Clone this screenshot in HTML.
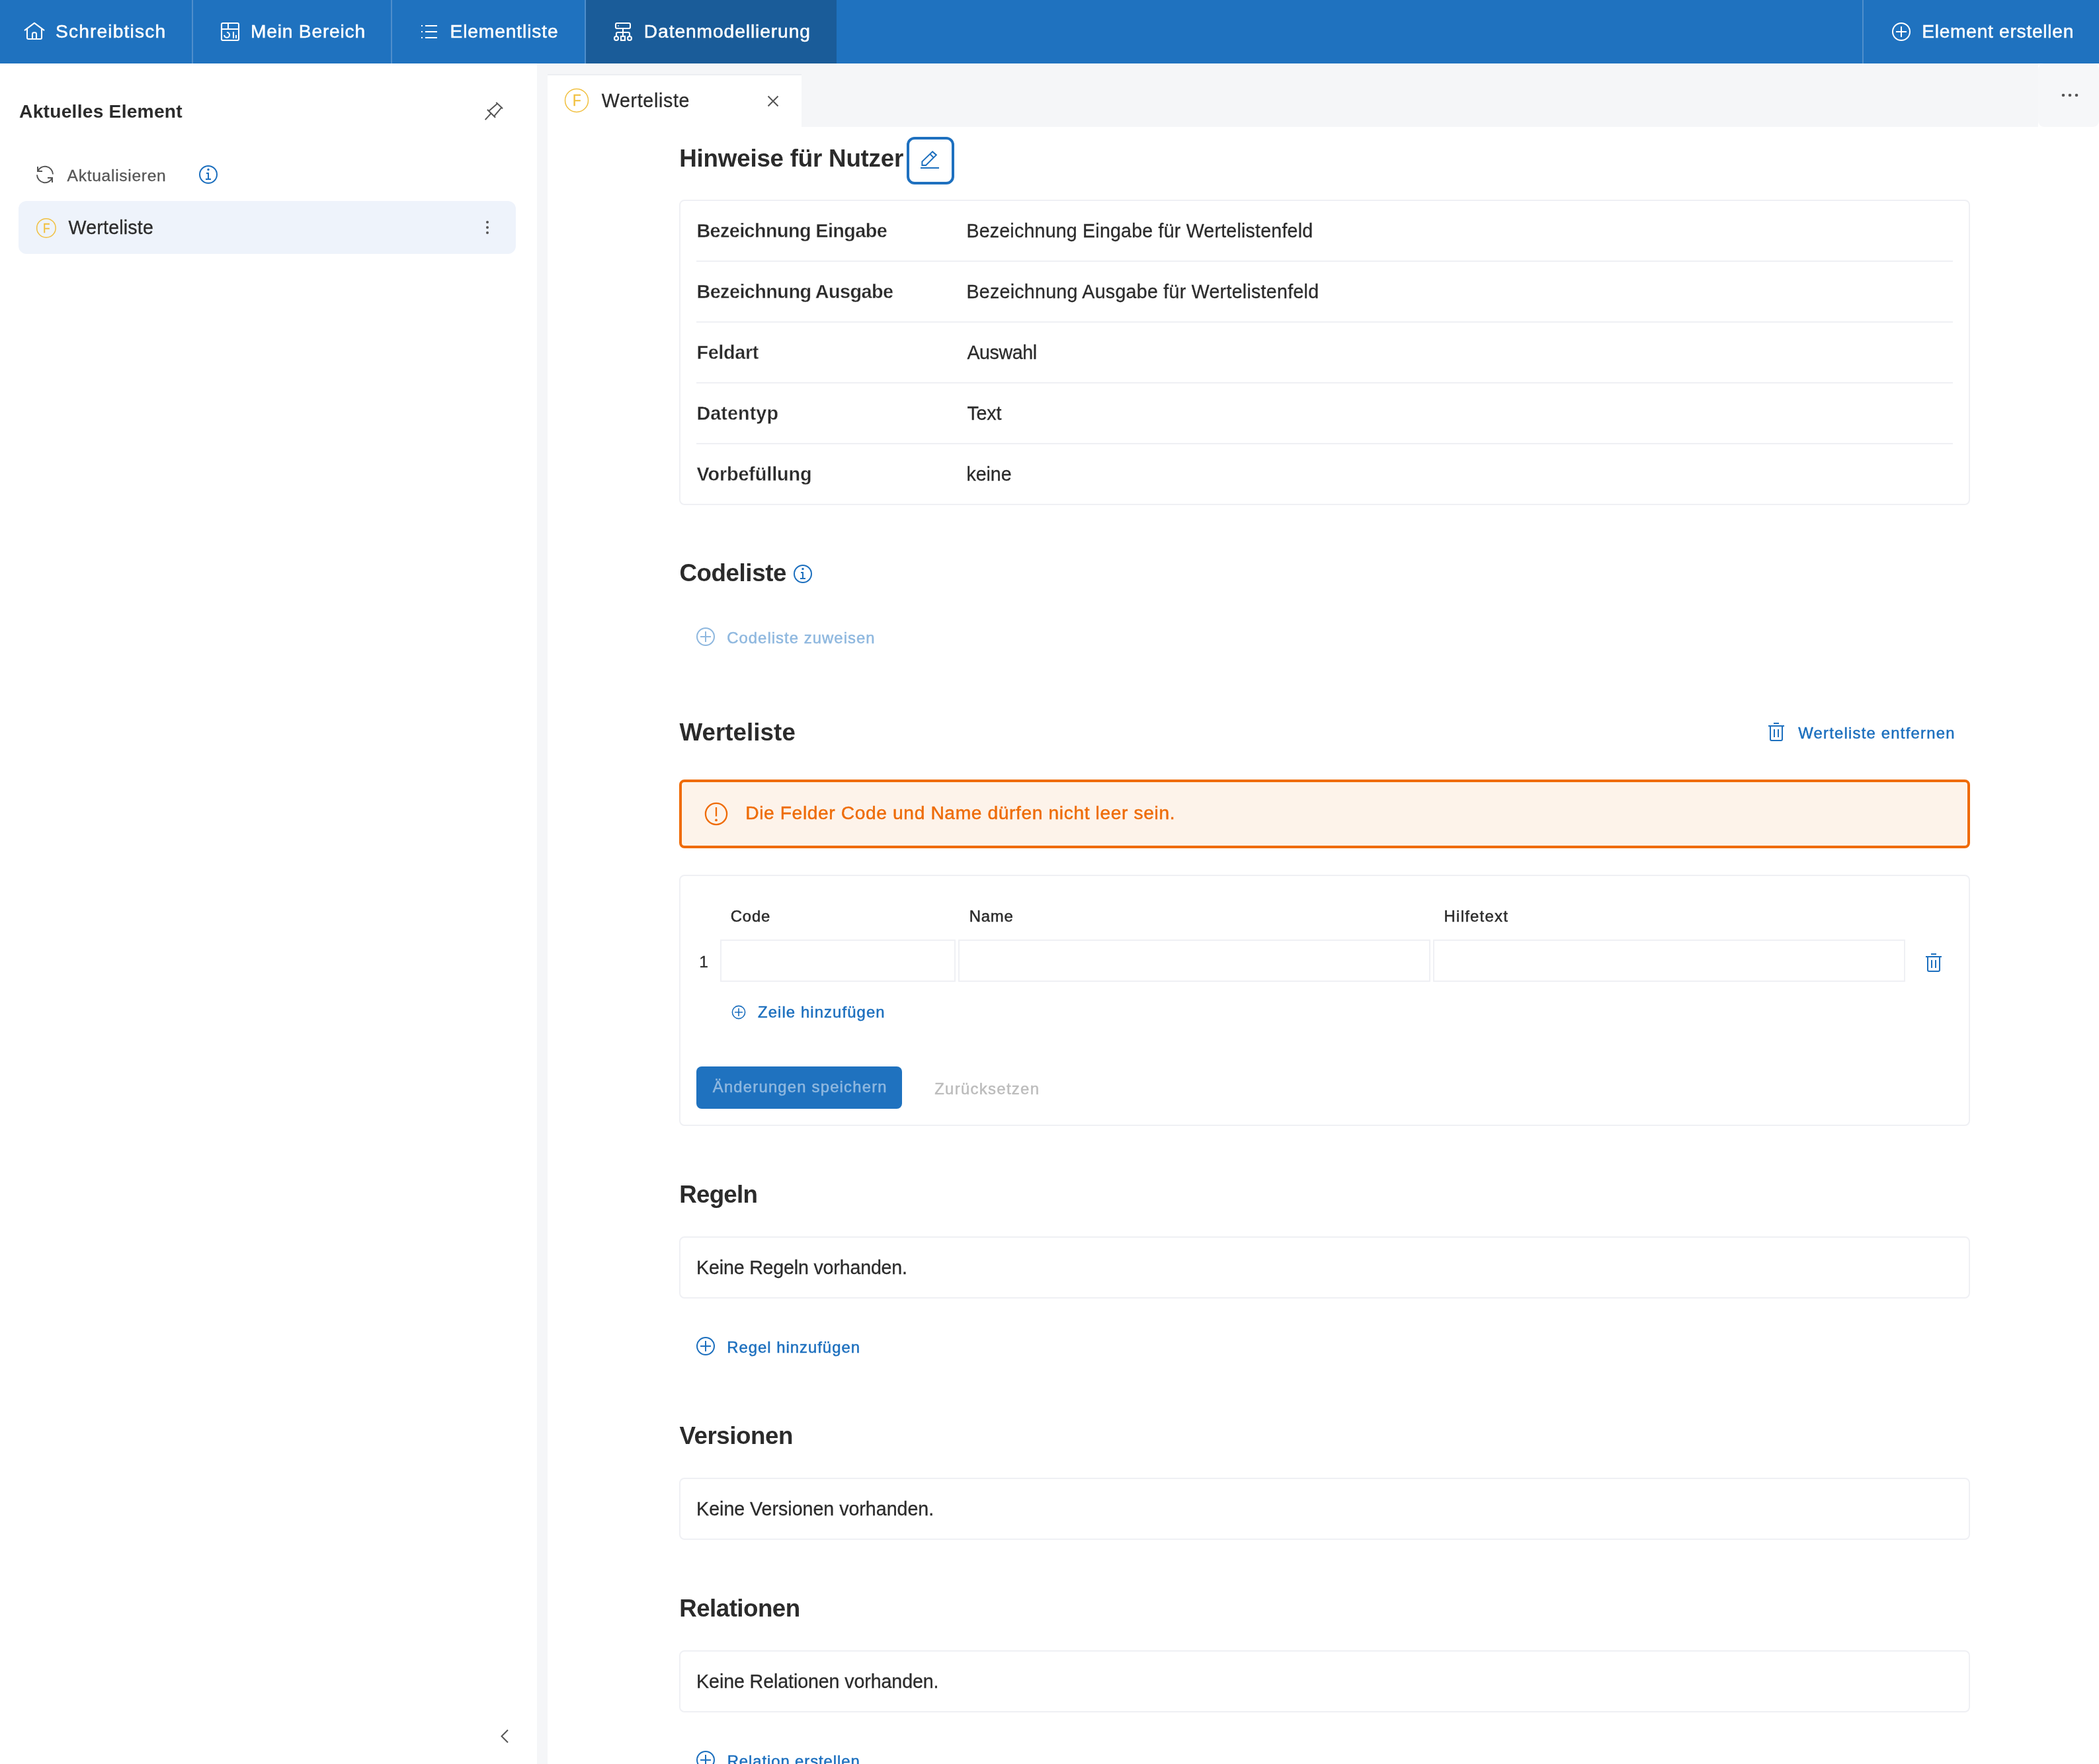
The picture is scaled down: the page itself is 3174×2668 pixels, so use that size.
<!DOCTYPE html>
<html lang="de"><head><meta charset="utf-8"><title>Datenmodellierung</title>
<style>
html,body{margin:0;padding:0;background:#fff;}
body{width:3174px;height:2668px;overflow:hidden;}
#page{position:relative;width:3174px;height:2668px;overflow:hidden;background:#fff;font-family:"Liberation Sans",sans-serif;}
.t{position:absolute;white-space:pre;font-family:"Liberation Sans",sans-serif;}
.a{position:absolute;box-sizing:border-box;}
svg{position:absolute;overflow:visible;}
.card{position:absolute;box-sizing:border-box;border:2px solid #eff0f4;border-radius:8px;background:#fff;}
.hr{position:absolute;height:2px;background:#eff0f4;left:1053px;width:1900px;}
.inp{position:absolute;box-sizing:border-box;border:2px solid #eff0f4;background:#fff;top:1421px;height:64px;}
#txt{position:absolute;left:0;top:0;width:3174px;height:2668px;overflow:hidden;will-change:transform;}

</style></head>
<body>
<div id="page">
<!-- top nav -->
<div class="a" style="left:0;top:0;width:3174px;height:96px;background:#1f72bf"></div>
<div class="a" style="left:886px;top:0;width:379px;height:96px;background:#1a5c99"></div>
<div class="a" style="left:290px;top:0;width:2px;height:96px;background:#4f8ecb"></div>
<div class="a" style="left:591px;top:0;width:2px;height:96px;background:#4f8ecb"></div>
<div class="a" style="left:884px;top:0;width:2px;height:96px;background:#4f8ecb"></div>
<div class="a" style="left:2816px;top:0;width:2px;height:96px;background:#4f8ecb"></div>
<!-- grey areas -->
<div class="a" style="left:812px;top:96px;width:2362px;height:96px;background:#f5f6f8"></div>
<div class="a" style="left:812px;top:96px;width:16px;height:2572px;background:#f5f6f8"></div>
<div class="a" style="left:828px;top:112px;width:384px;height:82px;background:#fff;border-top:2px solid #eceef2"></div>
<div class="a" style="left:3082px;top:96px;width:92px;height:96px;background:#fff"></div>
<div class="a" style="left:3082px;top:96px;width:92px;height:96px;background:#f6f7f9;border-radius:9px"></div>
<!-- sidebar item -->
<div class="a" style="left:28px;top:304px;width:752px;height:80px;background:#eef3fb;border-radius:12px"></div>
<!-- cards -->
<div class="card" style="left:1027px;top:302px;width:1952px;height:462px"></div>
<div class="hr" style="top:394px"></div><div class="hr" style="top:486px"></div><div class="hr" style="top:578px"></div><div class="hr" style="top:670px"></div>
<div class="a" style="left:1371px;top:207px;width:72px;height:72px;border:4px solid #1e70bf;border-radius:12px"></div>
<div class="a" style="left:1027px;top:1179px;width:1952px;height:104px;border:4px solid #ef6b06;border-radius:8px;background:#fdf3ea"></div>
<div class="card" style="left:1027px;top:1323px;width:1952px;height:380px"></div>
<div class="inp" style="left:1089px;width:356px"></div>
<div class="inp" style="left:1449px;width:714px"></div>
<div class="inp" style="left:2167px;width:714px"></div>
<div class="a" style="left:1053px;top:1613px;width:311px;height:64px;border-radius:8px;background:#1f72bf"></div>
<div class="card" style="left:1027px;top:1870px;width:1952px;height:94px"></div>
<div class="card" style="left:1027px;top:2235px;width:1952px;height:94px"></div>
<div class="card" style="left:1027px;top:2496px;width:1952px;height:94px"></div>
<svg width="3174" height="2668" viewBox="0 0 3174 2668" style="left:0;top:0" fill="none" stroke-width="2">
<!-- nav icons (white) -->
<g stroke="#fff" stroke-width="2.1" stroke-linecap="round" stroke-linejoin="round">
  <path d="M37.6 45.6 L52 34.8 L66.4 45.6"/>
  <path d="M41 43.5 V57 a2 2 0 0 0 2 2 H61 a2 2 0 0 0 2 -2 V43.5"/>
  <path d="M49 59 V51.5 a2.3 2.3 0 0 1 2.3 -2.3 h1.4 a2.3 2.3 0 0 1 2.3 2.3 V59"/>
</g>
<g stroke="#fff" stroke-width="2.1">
  <rect x="335" y="35" width="26" height="26" rx="2"/>
  <path d="M335 44 H361 M345 35 V44"/>
  <path d="M343.1 49 A3.9 3.9 0 1 1 339.2 52.9"/>
  <path d="M353 48 V58" stroke-width="2.1"/>
  <path d="M357 53 V58" stroke-width="2"/>
</g>
<g fill="#fff" stroke="none">
  <rect x="637" y="38" width="2" height="2"/><rect x="643" y="38" width="18" height="2"/>
  <rect x="637" y="47" width="2" height="2"/><rect x="643" y="47" width="18" height="2"/>
  <rect x="637" y="56" width="2" height="2"/><rect x="643" y="56" width="18" height="2"/>
</g>
<g stroke="#fff" stroke-width="2.1">
  <rect x="931" y="35" width="22" height="8" rx="2"/>
  <path d="M942 43 V55"/>
  <path d="M932 55 V51 a2 2 0 0 1 2 -2 H950 a2 2 0 0 1 2 2 V55"/>
  <circle cx="932" cy="58" r="3"/>
  <circle cx="952" cy="58" r="3"/>
  <rect x="939" y="55" width="6" height="6"/>
  <rect x="934" y="38" width="2" height="2" fill="#fff" fill-opacity="0.6" stroke="none"/>
</g>
<g stroke="#fff" stroke-width="2">
  <circle cx="2875" cy="48" r="13"/>
  <path d="M2867 48 H2883 M2875 40 V56"/>
</g>
<!-- sidebar icons -->
<g stroke="#555" stroke-width="2">
  <path d="M750.3 154.9 L760.1 164.3 M736.9 165.7 L749.1 177.7 M751.7 156.9 L739.7 167.4 M757.7 163.4 L747.7 175.1 M742.6 171.4 L733.7 181.1"/>
  <path d="M57 259 A12 12 0 0 1 80 263.5"/>
  <path d="M56 264.5 A12 12 0 0 0 79 269"/>
  <path d="M57 252 V259 H64 M72 269 H79 V276"/>
</g>
<g fill="#555" stroke="none">
  <circle cx="737" cy="336" r="2"/><circle cx="737" cy="344" r="2"/><circle cx="737" cy="352" r="2"/>
  <circle cx="3120" cy="144" r="2.3"/><circle cx="3130" cy="144" r="2.3"/><circle cx="3140" cy="144" r="2.3"/>
</g>
<g stroke="#555" stroke-width="2">
  <path d="M1161.5 145.5 L1176.5 160.5 M1176.5 145.5 L1161.5 160.5"/>
  <path d="M768 2616.5 L758.5 2626 L768 2635.5"/>
</g>
<!-- F circles -->
<g stroke="#f1c040" stroke-width="1.5">
  <circle cx="69.9" cy="344.9" r="14.25"/>
  <circle cx="872" cy="151.9" r="17.5"/>
</g>
<!-- info icons -->
<g stroke="#1c6fbe" stroke-width="2">
  <circle cx="315" cy="264" r="13"/>
  <path d="M312 262 H315 V271 M311 271 H319"/>
  <circle cx="1214" cy="868" r="13"/>
  <path d="M1211 866 H1214 V875 M1210 875 H1218"/>
</g>
<g fill="#1c6fbe" stroke="none"><circle cx="315" cy="256.5" r="1.7"/><circle cx="1214" cy="860.5" r="1.7"/></g>
<!-- pencil -->
<g stroke="#1c6fbe" stroke-width="2" stroke-linejoin="miter">
  <path d="M1394.4 250 V244.4 L1410.1 229.4 L1415.8 234.4 L1400.1 250 Z"/>
  <path d="M1406.8 233.4 L1411.5 238.2"/>
  <path d="M1392 254 H1420"/>
</g>
<!-- plus circles -->
<g stroke="#8fb8df" stroke-width="2"><circle cx="1067" cy="963" r="13"/><path d="M1059 963 H1075 M1067 955 V971"/></g>
<g stroke="#1c6fbe" stroke-width="2">
  <circle cx="1067" cy="2036" r="13"/><path d="M1059 2036 H1075 M1067 2028 V2044"/>
  <circle cx="1067" cy="2662" r="13"/><path d="M1059 2662 H1075 M1067 2654 V2670"/>
</g>
<g stroke="#1c6fbe" stroke-width="1.6"><circle cx="1117" cy="1531" r="9.6"/><path d="M1111 1531 H1123 M1117 1525 V1537"/></g>
<!-- trash icons -->
<g stroke="#1c6fbe" stroke-width="2">
  <path d="M2682 1094 H2690 M2674 1098 H2698 M2677 1098 V1118 a2 2 0 0 0 2 2 H2693 a2 2 0 0 0 2 -2 V1098 M2683 1103 V1115 M2689 1103 V1115"/>
  <path d="M2920 1443 H2928 M2912 1447 H2936 M2915 1447 V1467 a2 2 0 0 0 2 2 H2931 a2 2 0 0 0 2 -2 V1447 M2921 1452 V1464 M2927 1452 V1464"/>
</g>
<!-- alert icon -->
<g stroke="#ef6b06" stroke-width="2.3"><circle cx="1083" cy="1231" r="16.1"/><path d="M1083 1221 V1234.7"/></g>
<circle cx="1083" cy="1240.4" r="1.9" fill="#ef6b06" stroke="none"/>
</svg>

<div id="txt"><span class="t" style="left:84.0px;top:31px;font-size:28.2px;line-height:32px;font-weight:400;color:#fff;letter-spacing:1.140px;-webkit-text-stroke:0.5px;">Schreibtisch</span>
<span class="t" style="left:379.1px;top:31px;font-size:28.2px;line-height:32px;font-weight:400;color:#fff;letter-spacing:0.769px;-webkit-text-stroke:0.5px;">Mein Bereich</span>
<span class="t" style="left:680.5px;top:31px;font-size:28.2px;line-height:32px;font-weight:400;color:#fff;letter-spacing:0.877px;-webkit-text-stroke:0.5px;">Elementliste</span>
<span class="t" style="left:973.8px;top:31px;font-size:28.2px;line-height:32px;font-weight:400;color:#fff;letter-spacing:0.910px;-webkit-text-stroke:0.5px;">Datenmodellierung</span>
<span class="t" style="left:2906.2px;top:31px;font-size:28.2px;line-height:32px;font-weight:400;color:#fff;letter-spacing:0.712px;-webkit-text-stroke:0.5px;">Element erstellen</span>
<span class="t" style="left:29.1px;top:152px;font-size:28.2px;line-height:32px;font-weight:700;color:#2b2b2b;letter-spacing:0.235px;">Aktuelles Element</span>
<span class="t" style="left:101.6px;top:252px;font-size:24.6px;line-height:27px;font-weight:400;color:#555;letter-spacing:0.697px;-webkit-text-stroke:0.3px;">Aktualisieren</span>
<span class="t" style="left:103.5px;top:328px;font-size:28.6px;line-height:32px;font-weight:400;color:#2b2b2b;letter-spacing:0.201px;-webkit-text-stroke:0.3px;">Werteliste</span>
<span class="t" style="left:909.8px;top:136px;font-size:28.6px;line-height:32px;font-weight:400;color:#2b2b2b;letter-spacing:0.668px;-webkit-text-stroke:0.3px;">Werteliste</span>
<span class="t" style="left:1027.3px;top:219px;font-size:36.77px;line-height:41px;font-weight:700;color:#2b2b2b;letter-spacing:-0.234px;">Hinweise für Nutzer</span>
<span class="t" style="left:1053.4px;top:333px;font-size:28.78px;line-height:32px;font-weight:700;color:#2b2b2b;letter-spacing:-0.588px;-webkit-text-stroke:0.3px #fff;">Bezeichnung Eingabe</span>
<span class="t" style="left:1053.4px;top:425px;font-size:28.78px;line-height:32px;font-weight:700;color:#2b2b2b;letter-spacing:-0.539px;-webkit-text-stroke:0.3px #fff;">Bezeichnung Ausgabe</span>
<span class="t" style="left:1053.4px;top:517px;font-size:28.78px;line-height:32px;font-weight:700;color:#2b2b2b;letter-spacing:-0.321px;-webkit-text-stroke:0.3px #fff;">Feldart</span>
<span class="t" style="left:1053.4px;top:609px;font-size:28.78px;line-height:32px;font-weight:700;color:#2b2b2b;letter-spacing:0.070px;-webkit-text-stroke:0.3px #fff;">Datentyp</span>
<span class="t" style="left:1053.6px;top:701px;font-size:28.78px;line-height:32px;font-weight:700;color:#2b2b2b;letter-spacing:-0.124px;-webkit-text-stroke:0.3px #fff;">Vorbefüllung</span>
<span class="t" style="left:1461.4px;top:333px;font-size:28.6px;line-height:32px;font-weight:400;color:#2b2b2b;letter-spacing:0.201px;-webkit-text-stroke:0.3px;">Bezeichnung Eingabe für Wertelistenfeld</span>
<span class="t" style="left:1461.4px;top:425px;font-size:28.6px;line-height:32px;font-weight:400;color:#2b2b2b;letter-spacing:0.270px;-webkit-text-stroke:0.3px;">Bezeichnung Ausgabe für Wertelistenfeld</span>
<span class="t" style="left:1462.4px;top:517px;font-size:28.6px;line-height:32px;font-weight:400;color:#2b2b2b;letter-spacing:-0.374px;-webkit-text-stroke:0.3px;">Auswahl</span>
<span class="t" style="left:1462.4px;top:609px;font-size:28.6px;line-height:32px;font-weight:400;color:#2b2b2b;letter-spacing:-0.170px;-webkit-text-stroke:0.3px;">Text</span>
<span class="t" style="left:1461.4px;top:701px;font-size:28.6px;line-height:32px;font-weight:400;color:#2b2b2b;letter-spacing:-0.039px;-webkit-text-stroke:0.3px;">keine</span>
<span class="t" style="left:1027.4px;top:846px;font-size:36.77px;line-height:41px;font-weight:700;color:#2b2b2b;letter-spacing:-0.430px;">Codeliste</span>
<span class="t" style="left:1099.2px;top:951px;font-size:23.9px;line-height:27px;font-weight:400;color:#8fb8df;letter-spacing:1.032px;-webkit-text-stroke:0.5px;">Codeliste zuweisen</span>
<span class="t" style="left:1027.4px;top:1087px;font-size:36.77px;line-height:41px;font-weight:700;color:#2b2b2b;letter-spacing:0.043px;">Werteliste</span>
<span class="t" style="left:2719.2px;top:1095px;font-size:23.9px;line-height:27px;font-weight:400;color:#1c6fbe;letter-spacing:1.207px;-webkit-text-stroke:0.5px;">Werteliste entfernen</span>
<span class="t" style="left:1127.2px;top:1213px;font-size:28.2px;line-height:32px;font-weight:400;color:#ee6c08;letter-spacing:0.614px;-webkit-text-stroke:0.5px;">Die Felder Code und Name dürfen nicht leer sein.</span>
<span class="t" style="left:1104.8px;top:1372px;font-size:23.9px;line-height:27px;font-weight:400;color:#2b2b2b;letter-spacing:0.787px;-webkit-text-stroke:0.5px;">Code</span>
<span class="t" style="left:1465.8px;top:1372px;font-size:23.9px;line-height:27px;font-weight:400;color:#2b2b2b;letter-spacing:0.751px;-webkit-text-stroke:0.5px;">Name</span>
<span class="t" style="left:2183.6px;top:1372px;font-size:23.9px;line-height:27px;font-weight:400;color:#2b2b2b;letter-spacing:1.241px;-webkit-text-stroke:0.5px;">Hilfetext</span>
<span class="t" style="left:1057.2px;top:1441px;font-size:24.6px;line-height:27px;font-weight:400;color:#2b2b2b;letter-spacing:0.000px;-webkit-text-stroke:0.3px;">1</span>
<span class="t" style="left:1146.0px;top:1517px;font-size:23.9px;line-height:27px;font-weight:400;color:#1c6fbe;letter-spacing:1.084px;-webkit-text-stroke:0.5px;">Zeile hinzufügen</span>
<span class="t" style="left:1077.8px;top:1630px;font-size:23.9px;line-height:27px;font-weight:400;color:#8fb8df;letter-spacing:1.177px;-webkit-text-stroke:0.5px;">Änderungen speichern</span>
<span class="t" style="left:1413.2px;top:1633px;font-size:23.9px;line-height:27px;font-weight:400;color:#bcbcbc;letter-spacing:1.307px;-webkit-text-stroke:0.5px;">Zurücksetzen</span>
<span class="t" style="left:1027.2px;top:1786px;font-size:36.77px;line-height:41px;font-weight:700;color:#2b2b2b;letter-spacing:-0.764px;">Regeln</span>
<span class="t" style="left:1053.1px;top:1901px;font-size:28.6px;line-height:32px;font-weight:400;color:#2b2b2b;letter-spacing:-0.172px;-webkit-text-stroke:0.3px;">Keine Regeln vorhanden.</span>
<span class="t" style="left:1099.2px;top:2024px;font-size:23.9px;line-height:27px;font-weight:400;color:#1c6fbe;letter-spacing:0.988px;-webkit-text-stroke:0.5px;">Regel hinzufügen</span>
<span class="t" style="left:1027.4px;top:2151px;font-size:36.77px;line-height:41px;font-weight:700;color:#2b2b2b;letter-spacing:-0.460px;">Versionen</span>
<span class="t" style="left:1053.1px;top:2266px;font-size:28.6px;line-height:32px;font-weight:400;color:#2b2b2b;letter-spacing:-0.009px;-webkit-text-stroke:0.3px;">Keine Versionen vorhanden.</span>
<span class="t" style="left:1027.2px;top:2412px;font-size:36.77px;line-height:41px;font-weight:700;color:#2b2b2b;letter-spacing:-0.544px;">Relationen</span>
<span class="t" style="left:1053.1px;top:2527px;font-size:28.6px;line-height:32px;font-weight:400;color:#2b2b2b;letter-spacing:-0.092px;-webkit-text-stroke:0.3px;">Keine Relationen vorhanden.</span>
<span class="t" style="left:1099.7px;top:2650px;font-size:23.9px;line-height:27px;font-weight:400;color:#1c6fbe;letter-spacing:0.905px;-webkit-text-stroke:0.5px;">Relation erstellen</span>
<span class="t" style="left:64.9px;top:334px;font-size:20px;line-height:22px;color:#f1c040;-webkit-text-stroke:0.4px;transform:scaleX(.86);transform-origin:0 0">F</span>
<span class="t" style="left:865.9px;top:138px;font-size:24.1px;line-height:27px;color:#f1c040;-webkit-text-stroke:0.4px;transform:scaleX(.86);transform-origin:0 0">F</span></div>
</div>
<script>(function(){var d=window.devicePixelRatio||1,w=window.innerWidth||0;if(d!==1&&Math.abs(w*d-3174)<8){document.documentElement.style.zoom=1/d;}})();</script>
</body></html>
